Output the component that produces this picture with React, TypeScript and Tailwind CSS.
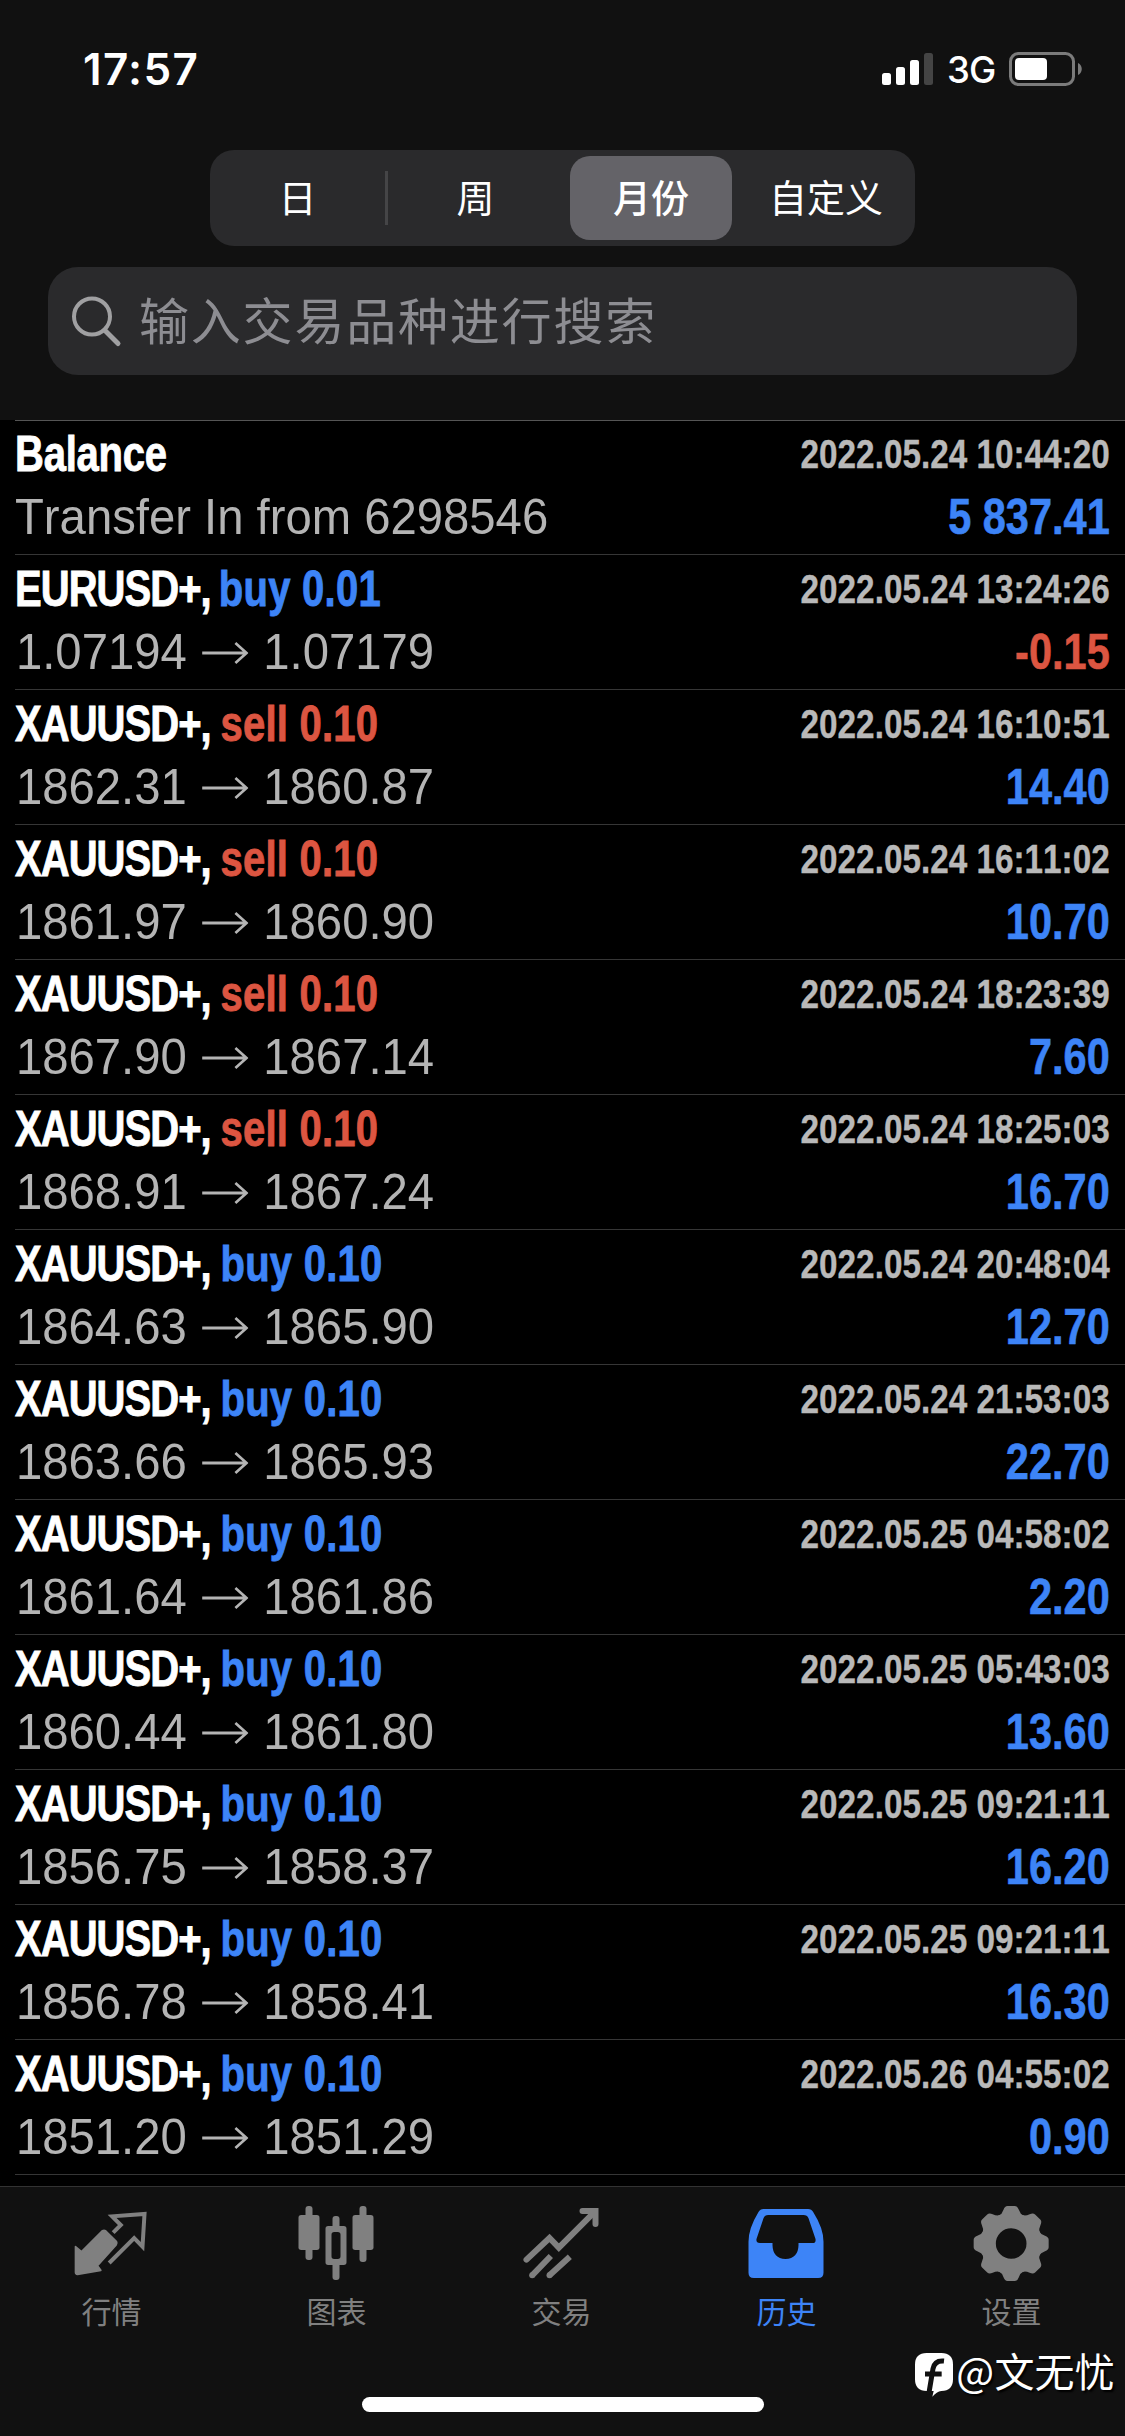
import React from "react";

type Deal = {
  symbol: string;
  side?: "buy" | "sell";
  lots?: string;
  time: string;
  from: string;
  to?: string;
  amount: string;
};

const deals: Deal[] = [
  { symbol: "Balance", time: "2022.05.24 10:44:20", from: "Transfer In from 6298546", amount: "5 837.41" },
  { symbol: "EURUSD+,", side: "buy", lots: "0.01", time: "2022.05.24 13:24:26", from: "1.07194", to: "1.07179", amount: "-0.15" },
  { symbol: "XAUUSD+,", side: "sell", lots: "0.10", time: "2022.05.24 16:10:51", from: "1862.31", to: "1860.87", amount: "14.40" },
  { symbol: "XAUUSD+,", side: "sell", lots: "0.10", time: "2022.05.24 16:11:02", from: "1861.97", to: "1860.90", amount: "10.70" },
  { symbol: "XAUUSD+,", side: "sell", lots: "0.10", time: "2022.05.24 18:23:39", from: "1867.90", to: "1867.14", amount: "7.60" },
  { symbol: "XAUUSD+,", side: "sell", lots: "0.10", time: "2022.05.24 18:25:03", from: "1868.91", to: "1867.24", amount: "16.70" },
  { symbol: "XAUUSD+,", side: "buy", lots: "0.10", time: "2022.05.24 20:48:04", from: "1864.63", to: "1865.90", amount: "12.70" },
  { symbol: "XAUUSD+,", side: "buy", lots: "0.10", time: "2022.05.24 21:53:03", from: "1863.66", to: "1865.93", amount: "22.70" },
  { symbol: "XAUUSD+,", side: "buy", lots: "0.10", time: "2022.05.25 04:58:02", from: "1861.64", to: "1861.86", amount: "2.20" },
  { symbol: "XAUUSD+,", side: "buy", lots: "0.10", time: "2022.05.25 05:43:03", from: "1860.44", to: "1861.80", amount: "13.60" },
  { symbol: "XAUUSD+,", side: "buy", lots: "0.10", time: "2022.05.25 09:21:11", from: "1856.75", to: "1858.37", amount: "16.20" },
  { symbol: "XAUUSD+,", side: "buy", lots: "0.10", time: "2022.05.25 09:21:11", from: "1856.78", to: "1858.41", amount: "16.30" },
  { symbol: "XAUUSD+,", side: "buy", lots: "0.10", time: "2022.05.26 04:55:02", from: "1851.20", to: "1851.29", amount: "0.90" },
];

function StatusBar() {
  return (
    <div className="flex h-[150px] items-start justify-between pl-[83px] pr-[43px] pt-[42px] font-['Inter',sans-serif] text-white">
      <span className="text-[44px] font-semibold leading-[54px] tracking-[1.300px]">17:57</span>
      <div className="flex pt-[10px]">
        <svg className="h-[34px] w-[52px]" viewBox="0 0 52 34">
          <rect x="0" y="21" width="9" height="12" rx="2.5" fill="#fff" />
          <rect x="14" y="15" width="9" height="18" rx="2.5" fill="#fff" />
          <rect x="28" y="8" width="9" height="25" rx="2.5" fill="#fff" />
          <rect x="42" y="1" width="9" height="32" rx="2.5" fill="#444" />
        </svg>
        <span className="ml-[13px] w-[48px] whitespace-nowrap text-[36.500px] font-medium leading-[37px] tracking-[-1px]">3G</span>
        <svg className="ml-[14px] h-[34px] w-[73px]" viewBox="0 0 73 34">
          <rect x="1.5" y="1.5" width="63" height="31" rx="8" fill="none" stroke="#7b7b7b" strokeWidth="3" />
          <rect x="6" y="6" width="32" height="22" rx="4" fill="#fff" />
          <path d="M69 11c5 2 5 10 0 12z" fill="#7b7b7b" />
        </svg>
      </div>
    </div>
  );
}

function Segments() {
  const cell = "flex flex-1 items-center justify-center pt-[2px]";
  return (
    <div className="mx-auto flex h-[96px] w-[705px] items-center rounded-[24px] bg-[#2a2a2c] text-[38px] text-white">
      <div className={cell}>日</div>
      <div className="h-[54px] w-[3px] bg-[#454547]" />
      <div className={cell}>周</div>
      <div className="mx-[7px] flex h-[84px] w-[162px] items-center justify-center rounded-[20px] bg-[#646368] pt-[2px] font-medium">月份</div>
      <div className="flex w-[176px] items-center justify-center pr-[2px] pt-[2px]">自定义</div>
    </div>
  );
}

function SearchField() {
  return (
    <div className="mx-[48px] mt-[21px] flex h-[108px] items-center rounded-[30px] bg-[#2a2a2c] pl-[22px]">
      <svg className="h-[54px] w-[54px]" viewBox="0 0 54 54" fill="none" stroke="#a0a0a2" strokeLinecap="round">
        <circle cx="22" cy="22.500" r="18" strokeWidth="4" />
        <path d="M35.500 37L48 49.500" strokeWidth="5" />
      </svg>
      <span className="ml-[15px] pt-[4px] text-[50px] leading-[60px] tracking-[1.800px] text-[#8d8d92]">输入交易品种进行搜索</span>
    </div>
  );
}

function Arrow() {
  return (
    <svg className="mx-[16px] mt-[20px] h-[24px] w-[49px]" viewBox="0 0 48 24" preserveAspectRatio="none" fill="none" stroke="#b4b4b4" strokeWidth="2.800">
      <path d="M0 12H46M34.500 2L46 12L34.500 22" />
    </svg>
  );
}

function DealRow({ deal, first }: { deal: Deal; first: boolean }) {
  const loss = deal.amount.startsWith("-");
  return (
    <div className={`ml-[15px] flex justify-between whitespace-nowrap border-b border-[#363636] pr-[15px] [font-kerning:none] ${first ? "h-[134px] pt-[2px]" : "h-[135px] pt-[3px]"}`}>
      <div className="text-[50px] leading-[63px]">
        <div className="h-[63px] origin-left scale-x-[0.8] font-bold text-white [-webkit-text-stroke:0.9px_currentColor]">
          <span className={deal.side ? "tracking-[-1.200px]" : "tracking-[-0.300px]"}>{deal.symbol}</span>
          {deal.side && (
            <span className={`tracking-[0.300px] ${deal.lots === "0.01" ? "ml-[-4px]" : "ml-[-2px]"} ${deal.side === "buy" ? "text-[#3d84f7]" : "text-[#dc5541]"}`}> {deal.side} {deal.lots}</span>
          )}
        </div>
        <div className={`flex h-[63px] origin-left scale-x-[0.945] text-[#b4b4b4] ${deal.to ? "pl-px" : ""}`}>
          <span>{deal.from}</span>
          {deal.to && (
            <>
              <Arrow />
              <span>{deal.to}</span>
            </>
          )}
        </div>
      </div>
      <div className="text-right font-bold leading-[63px]">
        <div className="h-[63px] origin-right scale-x-[0.812] text-[41px] text-[#b9b9b9] [-webkit-text-stroke:0.4px_currentColor]">{deal.time}</div>
        <div className={`h-[63px] origin-right scale-x-[0.83] text-[50px] [-webkit-text-stroke:0.6px_currentColor] ${loss ? "text-[#dc5541]" : "text-[#3d84f7]"}`}>{deal.amount}</div>
      </div>
    </div>
  );
}

function QuotesIcon() {
  return (
    <svg className="h-20 w-20" viewBox="217.5 129 240 240">
      <path d="M228 260L246 275L309 212Q314 209 319 213L351 245Q354 250 350 255L294 317L304 331L234 343Q228 343 228 337Z" fill="#808080" stroke="#808080" strokeWidth="5" strokeLinejoin="round" />
      <path d="M341 218L364 195L338 169L435 162L429 260L404 234L329 309" fill="none" stroke="#808080" strokeWidth="12" strokeLinejoin="miter" strokeMiterlimit="5" />
    </svg>
  );
}

function ChartIcon() {
  return (
    <svg className="h-20 w-20" viewBox="892.5 129 240 240" fill="#808080">
      <rect x="918" y="138" width="21" height="162" rx="9" />
      <rect x="897" y="165" width="63" height="105" rx="8" />
      <rect x="1080" y="138" width="21" height="168" rx="9" />
      <rect x="1059" y="165" width="63" height="105" rx="8" />
      <rect x="999" y="168" width="21" height="45" rx="9" />
      <rect x="999" y="306" width="21" height="54" rx="9" />
      <path fillRule="evenodd" d="M986 198h47q8 0 8 8v101q0 8-8 8h-47q-8 0-8-8V206q0-8 8-8zM1004 216q-8 0-8 8v65q0 8 8 8h11q8 0 8-8v-65q0-8-8-8z" />
    </svg>
  );
}

function TradeIcon() {
  return (
    <svg className="h-20 w-20" viewBox="367.5 129 240 240" fill="none" stroke="#808080" strokeWidth="18">
      <path d="M381 299L450 234L478 263L586 155" strokeLinecap="round" />
      <path d="M549 153H588V192" strokeLinecap="round" />
      <circle cx="398" cy="346" r="9" fill="#808080" stroke="none" />
      <circle cx="450" cy="346" r="9" fill="#808080" stroke="none" />
      <path d="M398 346L454 288M450 346L511 290" />
    </svg>
  );
}

function HistoryIcon() {
  return (
    <svg className="h-20 w-20" viewBox="1042.5 129 240 240" fill="#3d84f7">
      <path fillRule="evenodd" d="M1092 147H1226Q1236 147 1241 156Q1272 205 1272 245V338Q1272 354 1256 354H1063Q1047 354 1047 338V245Q1047 205 1077 156Q1082 147 1092 147ZM1106 165Q1096 165 1092 175L1071 237Q1069 249 1081 249H1119V256Q1120 296 1158 297Q1196 296 1197 256V249H1239Q1250 249 1248 237L1227 175Q1223 165 1212 165Z" />
    </svg>
  );
}

function SettingsIcon() {
  return (
    <svg className="h-20 w-20" viewBox="442.5 129 240 240" fill="#808080">
      <circle cx="560" cy="250.500" r="69" fill="none" stroke="#808080" strokeWidth="46" />
      {[0, 45, 90, 135, 180, 225, 270, 315].map((a) => (
        <path key={a} transform={`rotate(${a} 560 250.5)`} d="M522 168Q533 162 537 149Q541 138 549 138H571Q579 138 583 149Q587 162 598 168L590 185H530Z" />
      ))}
    </svg>
  );
}

const tabs = [
  { label: "行情", Icon: QuotesIcon },
  { label: "图表", Icon: ChartIcon },
  { label: "交易", Icon: TradeIcon },
  { label: "历史", Icon: HistoryIcon, active: true },
  { label: "设置", Icon: SettingsIcon },
];

export default function App() {
  return (
    <div className="relative flex h-[2436px] w-[1125px] flex-col overflow-hidden bg-black font-['Liberation_Sans','Noto_Sans_CJK_SC',sans-serif]">
      <header className="h-[420px] shrink-0 bg-[#111]">
        <StatusBar />
        <Segments />
        <SearchField />
      </header>
      <main className="h-[1766px] shrink-0">
        <div className="ml-[15px] h-px bg-[#555]" />
        {deals.map((deal, i) => (
          <DealRow key={i} deal={deal} first={i === 0} />
        ))}
      </main>
      <nav className="flex h-[250px] shrink-0 flex-col border-t border-[#333] bg-[#111]">
        <div className="grid grid-cols-5">
          {tabs.map(({ label, Icon, active }) => (
            <div key={label} className={`flex flex-col items-center pr-px pt-[16px] ${active ? "text-[#3d84f7]" : "text-[#808080]"}`}>
              <Icon />
              <span className="mt-[12px] pr-px text-[30px] leading-[36px]">{label}</span>
            </div>
          ))}
        </div>
        <div className="mx-auto mt-[66px] h-[15px] w-[402px] rounded-full bg-white" />
      </nav>
      <div className="absolute right-[10px] top-[2342px] flex items-center text-white [text-shadow:2px_2px_2px_#000]">
        <svg className="mt-[10px] h-[46px] w-[40px]" viewBox="0 0 120 138">
          <path d="M38 3H82Q117 3 117 38V82Q117 117 82 117Q68 119 55 134L59 117H38Q3 117 3 82V38Q3 3 38 3Z" fill="#fff" />
          <path d="M90 27Q62 24 57 50L44 128M33 66H83" fill="none" stroke="#111" strokeWidth="15" />
        </svg>
        <span className="ml-[2px] font-['Noto_Sans_CJK_SC',sans-serif] text-[40px] leading-[50px] tracking-[0.200px]">@文无忧</span>
      </div>
    </div>
  );
}
